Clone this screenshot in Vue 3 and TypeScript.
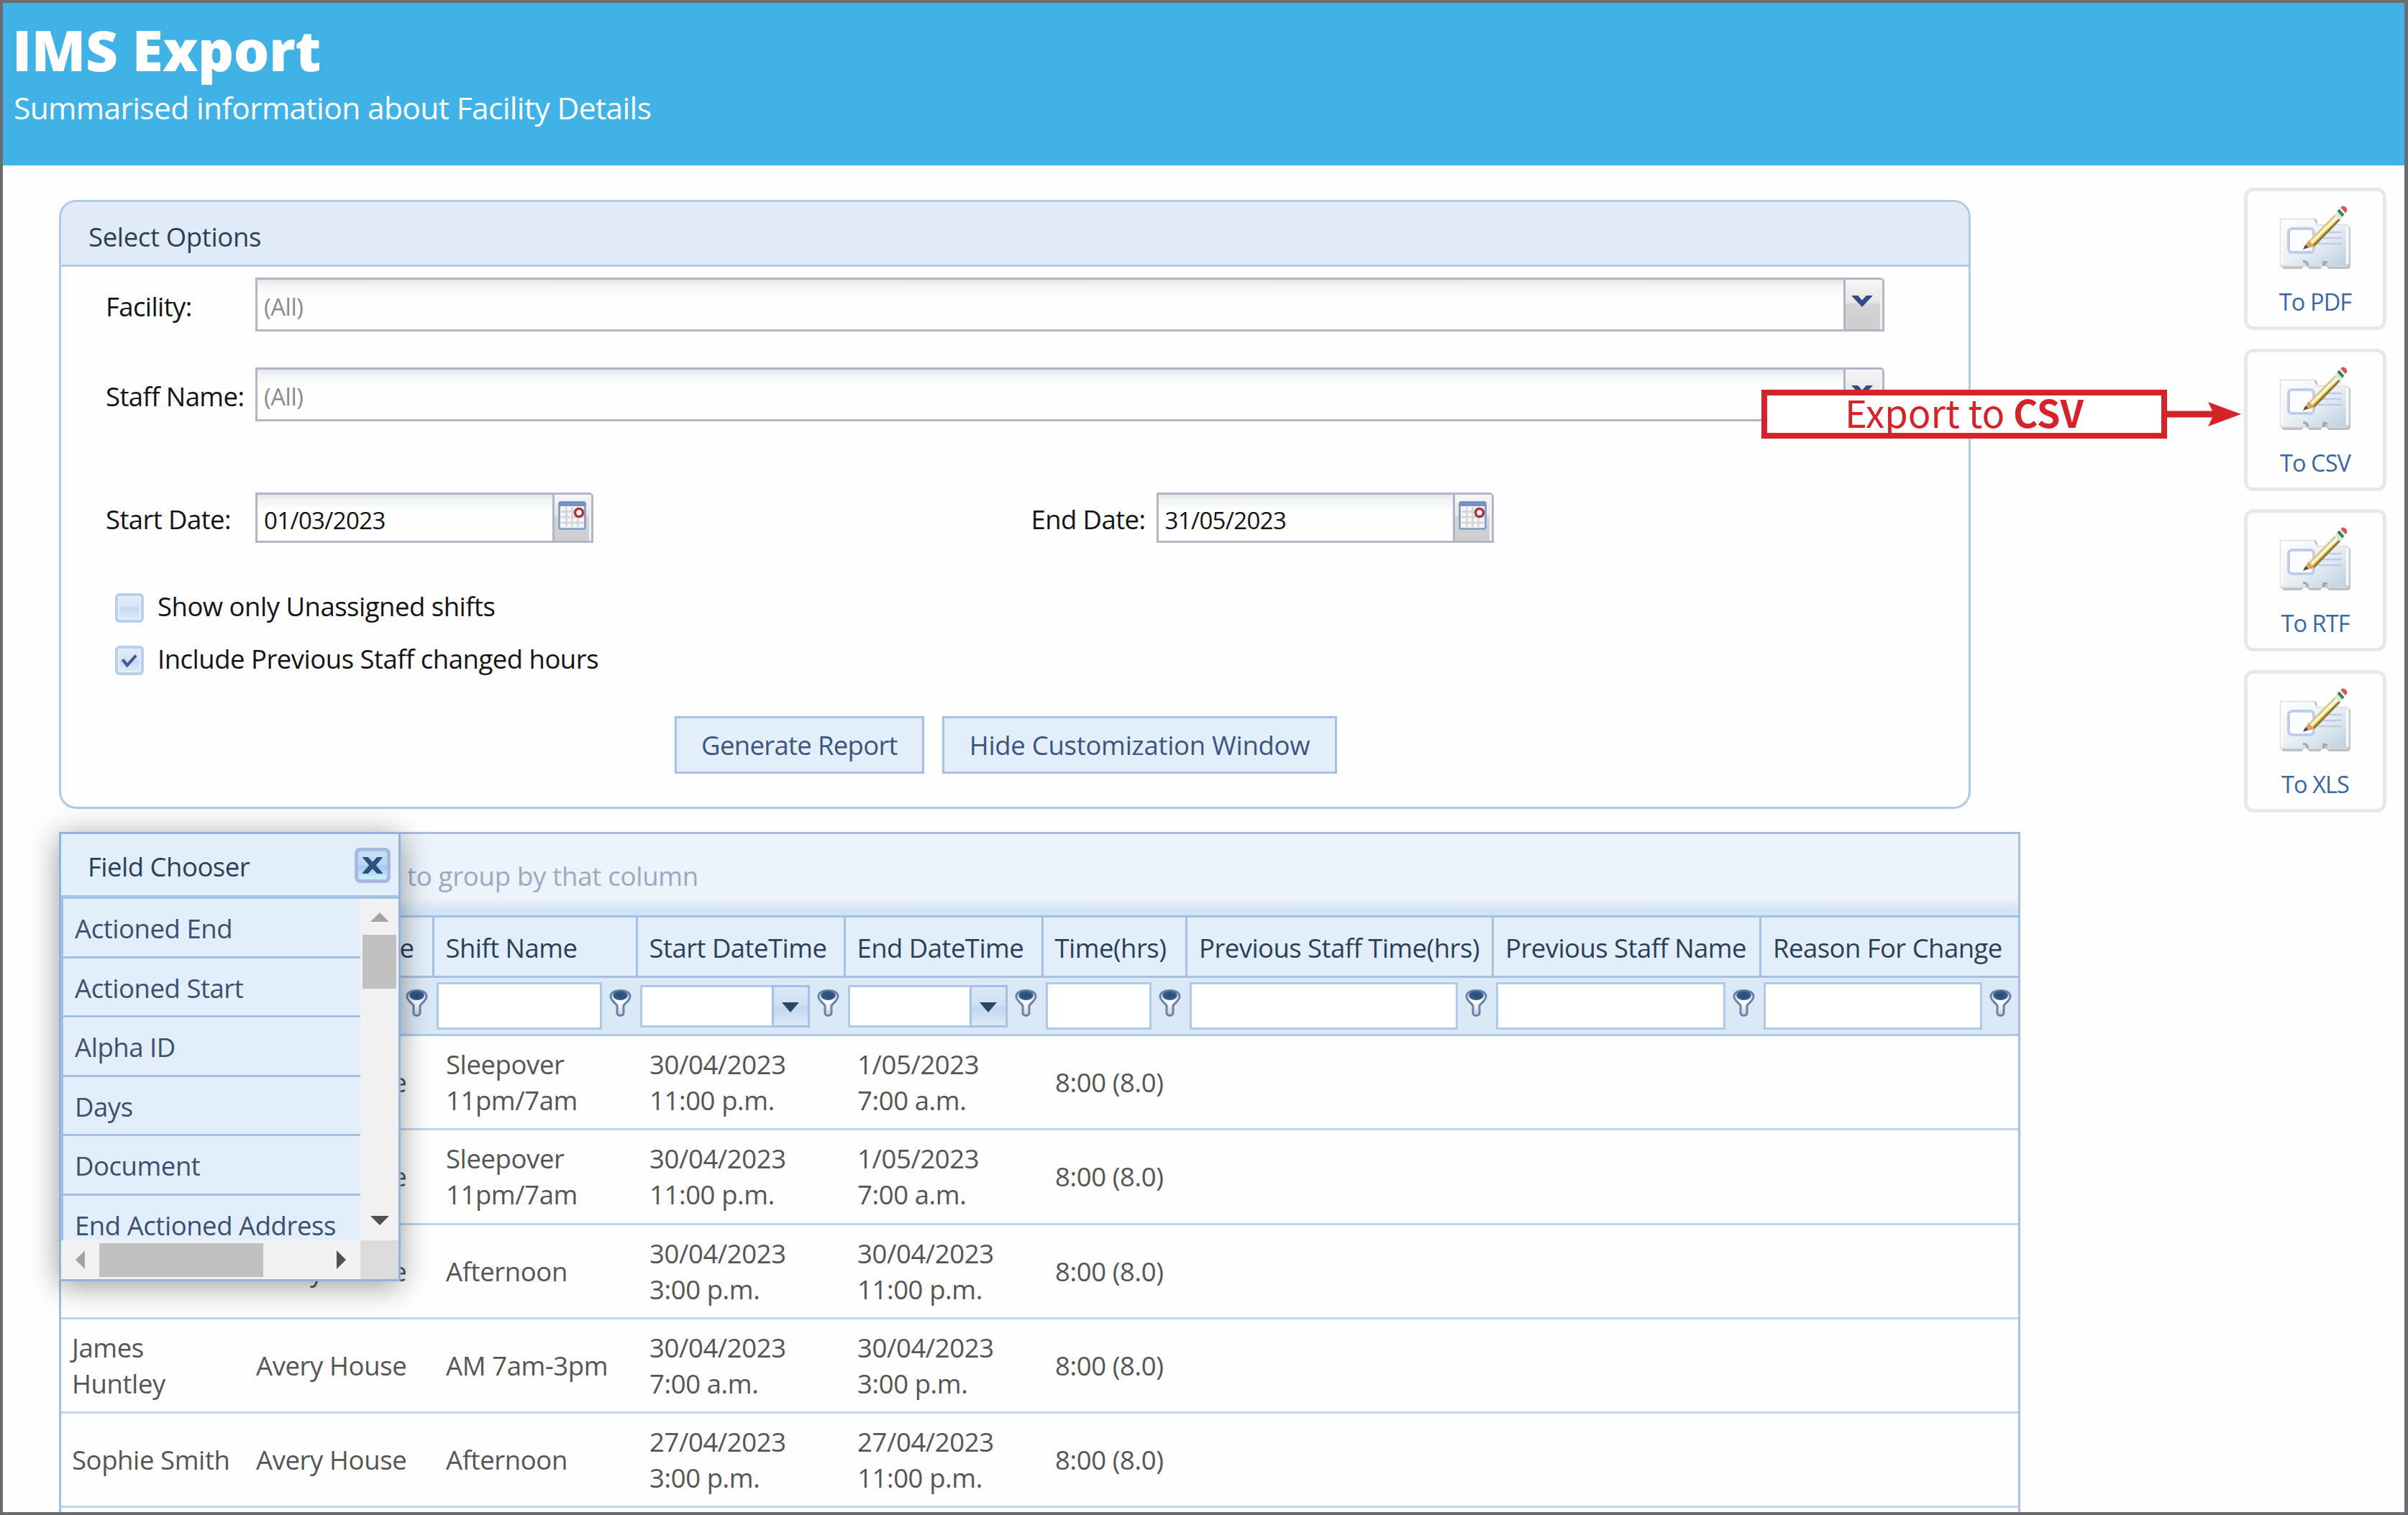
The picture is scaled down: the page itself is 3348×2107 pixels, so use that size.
<script setup lang="ts">
interface Column {
  title: string
  width: number
  filter: 'text' | 'date'
}

interface Shift {
  staff: string
  facility: string
  shift: string
  start: string[]
  end: string[]
  hours: string
}

const columns: Column[] = [
  { title: '', width: 254.5, filter: 'text' },
  { title: 'Facility Name', width: 264, filter: 'text' },
  { title: 'Shift Name', width: 283, filter: 'text' },
  { title: 'Start DateTime', width: 289, filter: 'date' },
  { title: 'End DateTime', width: 275, filter: 'date' },
  { title: 'Time(hrs)', width: 200.5, filter: 'text' },
  { title: 'Previous Staff Time(hrs)', width: 426, filter: 'text' },
  { title: 'Previous Staff Name', width: 372, filter: 'text' },
  { title: 'Reason For Change', width: 357, filter: 'text' },
]

const template = columns.map((c) => c.width + 'px').join(' ')

const rows: Shift[] = [
  { staff: '', facility: 'Avery House', shift: 'Sleepover 11pm/7am', start: ['30/04/2023', '11:00 p.m.'], end: ['1/05/2023', '7:00 a.m.'], hours: '8:00 (8.0)' },
  { staff: '', facility: 'Avery House', shift: 'Sleepover 11pm/7am', start: ['30/04/2023', '11:00 p.m.'], end: ['1/05/2023', '7:00 a.m.'], hours: '8:00 (8.0)' },
  { staff: '', facility: 'Avery House', shift: 'Afternoon', start: ['30/04/2023', '3:00 p.m.'], end: ['30/04/2023', '11:00 p.m.'], hours: '8:00 (8.0)' },
  { staff: 'James Huntley', facility: 'Avery House', shift: 'AM 7am-3pm', start: ['30/04/2023', '7:00 a.m.'], end: ['30/04/2023', '3:00 p.m.'], hours: '8:00 (8.0)' },
  { staff: 'Sophie Smith', facility: 'Avery House', shift: 'Afternoon', start: ['27/04/2023', '3:00 p.m.'], end: ['27/04/2023', '11:00 p.m.'], hours: '8:00 (8.0)' },
]

const exports = ['To PDF', 'To CSV', 'To RTF', 'To XLS']

const fields = ['Actioned End', 'Actioned Start', 'Alpha ID', 'Days', 'Document', 'End Actioned Address']
</script>

<template>
  <div class="page">
    <svg class="defs" width="0" height="0" aria-hidden="true">
      <defs>
        <linearGradient id="cardFill" x1="0" y1="0" x2="1" y2="1">
          <stop offset="0" stop-color="#ffffff" />
          <stop offset="0.5" stop-color="#e9f0f6" />
          <stop offset="1" stop-color="#bccede" />
        </linearGradient>
        <linearGradient id="pencilFill" x1="0" y1="1" x2="1" y2="0">
          <stop offset="0" stop-color="#efcf48" />
          <stop offset="0.5" stop-color="#f4dc6a" />
          <stop offset="1" stop-color="#fdf8dc" />
        </linearGradient>
        <linearGradient id="funnelFill" x1="0" y1="0" x2="0" y2="1">
          <stop offset="0" stop-color="#c9d5e6" />
          <stop offset="0.45" stop-color="#ffffff" />
          <stop offset="1" stop-color="#c3d0e2" />
        </linearGradient>
        <radialGradient id="funnelBall" cx="0.5" cy="0.55" r="0.6">
          <stop offset="0" stop-color="#274977" />
          <stop offset="0.7" stop-color="#3a5c8b" />
          <stop offset="1" stop-color="#7c96ba" />
        </radialGradient>
      </defs>
    </svg>

    <header class="header">
      <h1>IMS Export</h1>
      <p>Summarised information about Facility Details</p>
    </header>

    <main class="main">
      <div class="left">
        <section class="panel">
          <div class="panel-head">Select Options</div>
          <div class="panel-body">
            <div class="row">
              <label class="lbl">Facility:</label>
              <div class="field combo">
                <span class="ph">(All)</span>
                <span class="btn">
                  <svg width="30" height="18" viewBox="0 0 30 18"><path d="M0 1h9l6 6.500 6-6.500h9L15 17z" fill="#2c4d86" /></svg>
                </span>
              </div>
            </div>
            <div class="row staff-row">
              <label class="lbl">Staff Name:</label>
              <div class="field combo">
                <span class="ph">(All)</span>
                <span class="btn">
                  <svg width="30" height="18" viewBox="0 0 30 18"><path d="M0 1h9l6 6.500 6-6.500h9L15 17z" fill="#2c4d86" /></svg>
                </span>
              </div>
            </div>
            <div class="row date-row">
              <template v-for="(d, i) in [['Start Date:', '01/03/2023'], ['End Date:', '31/05/2023']]" :key="d[0]">
                <label class="lbl" :class="{ second: i === 1 }">{{ d[0] }}</label>
                <div class="field date">
                  <span class="val">{{ d[1] }}</span>
                  <span class="btn">
                    <svg width="39" height="40" viewBox="0 0 39 40">
                      <rect x="1.500" y="1.500" width="36" height="37" rx="2.500" fill="#f6f6f8" stroke="#86a3cc" stroke-width="3" />
                      <path d="M1 3a3 3 0 0 1 3-3h31a3 3 0 0 1 3 3v4H1z" fill="#7593c0" />
                      <path d="M4 14.500h31M4 22h31M4 30h31M11.500 8v28M19.500 8v28M27.500 8v28" stroke="#d3d3d7" stroke-width="2.500" fill="none" />
                      <circle cx="29" cy="16" r="5.500" fill="#fff" stroke="#ad3338" stroke-width="3.600" />
                    </svg>
                  </span>
                </div>
              </template>
            </div>
            <div class="check first">
              <span class="box"></span>
              <span class="check-text">Show only Unassigned shifts</span>
            </div>
            <div class="check">
              <span class="box on">
                <svg width="24" height="20" viewBox="0 0 26 22"><path d="M2.500 9l7 9L23 3" fill="none" stroke="#3d5d8e" stroke-width="4.500" /></svg>
              </span>
              <span class="check-text">Include Previous Staff changed hours</span>
            </div>
            <div class="actions">
              <button class="gen">Generate Report</button>
              <button class="hide">Hide Customization Window</button>
            </div>
          </div>
        </section>

        <section class="grid">
          <div class="group"><span>to group by that column</span></div>
          <div class="grid-row head" :style="{ gridTemplateColumns: template }">
            <div v-for="(c, i) in columns" :key="i" class="hcell">{{ c.title }}</div>
          </div>
          <div class="grid-row filters" :style="{ gridTemplateColumns: template }">
            <div v-for="(c, i) in columns" :key="i" class="fcell">
              <span v-if="c.filter === 'text'" class="finput"></span>
              <span v-else class="finput fdate">
                <span class="fbtn"><svg width="24" height="14" viewBox="0 0 24 14"><path d="M0 0h24L12 14z" fill="#2c4363" /></svg></span>
              </span>
              <svg class="funnel" width="31" height="38" viewBox="0 0 31 38">
                <path d="M2 10C2 4 8 1.500 15.500 1.500S29 4 29 10c0 5-6 8-9 12.500V33c0 4.500-9 4.500-9 0V22.500C8 18 2 15 2 10z" fill="url(#funnelFill)" stroke="#6683ac" stroke-width="3" />
                <ellipse cx="15.500" cy="8" rx="10.500" ry="7" fill="url(#funnelBall)" />
              </svg>
            </div>
          </div>
          <div v-for="(r, i) in rows" :key="i" class="grid-row data" :style="{ gridTemplateColumns: template }">
            <div class="cell">{{ r.staff }}</div>
            <div class="cell">{{ r.facility }}</div>
            <div class="cell">{{ r.shift }}</div>
            <div class="cell">{{ r.start[0] }}<br />{{ r.start[1] }}</div>
            <div class="cell">{{ r.end[0] }}<br />{{ r.end[1] }}</div>
            <div class="cell">{{ r.hours }}</div>
          </div>
          <div class="grid-row data"></div>
        </section>
      </div>

      <aside class="exports">
        <button v-for="e in exports" :key="e" class="export">
          <svg width="100" height="94" viewBox="0 0 100 94">
            <path d="M3 23h47l4 7h41c2 0 4 2 4 4v51c0 3-2 5-4 5H69l-4-4H60l-3 4H42l-4-4h-4l-3 4H6l-4-4z" fill="#bdc1c1" />
            <path d="M1.500 20.500H50l2 5v3h41.500l3.500 3.500v50l-3.500 4H68c-1-8-8-8-8 0H41c0-4-2-8-7-8l3 8H1.500z" fill="url(#cardFill)" stroke="#d8dee1" stroke-width="1.500" />
            <path d="M33 80c4-1 6 1 7 5M61 86l1-6 5 1" fill="none" stroke="#9da1a3" stroke-width="2.500" />
            <path d="M50 21l2 5" stroke="#a9adaf" stroke-width="2" />
            <path d="M94.500 31v52M3.500 23v60" stroke="#f8fafb" stroke-width="3" />
            <rect x="13" y="34" width="35" height="33" rx="5" fill="#fcfdfe" stroke="#c1ccea" stroke-width="4" />
            <path d="M66 39h21M58 47h29M54 55h33" stroke="#c3cae8" stroke-width="2.500" />
            <path d="M41 51L77 14.500l8 7.500-36 37z" fill="url(#pencilFill)" />
            <path d="M41 51L77 14.500l2 2-36 36.500z" fill="#d9c68a" />
            <path d="M43 53l36-36.500 2 2L45 55z" fill="#fffbe0" />
            <path d="M46.500 56.500L82.500 20l2.500 2-36 37z" fill="#8f7a42" />
            <path d="M34 62l6.500-12 9 9z" fill="#dfa265" />
            <path d="M33 63l3.500-7 4 4z" fill="#4a4a4a" />
            <path d="M77 14.500l4-5.500 8.500 8.500-4.500 4.500z" fill="#dfe5e4" />
            <path d="M80.500 9.500l3-3 7 8-3 3z" fill="#2f8450" />
            <path d="M83.500 6.500l2-2 7 7.500-2 2.500z" fill="#eef1f1" />
            <path d="M86 4c3-4 10 1.500 8 6l-2 2-6.500-7z" fill="#dc555a" />
          </svg>
          <span>{{ e }}</span>
        </button>
      </aside>
    </main>

    <div class="chooser">
      <div class="chooser-head">
        <span>Field Chooser</span>
        <span class="close">
          <svg width="30" height="25" viewBox="0 0 30 26"><path d="M0 1h8.500l6.500 7 6.500-7H30l-2 2.500-8 9.500 8 9 2 3h-8.500L15 18l-6.500 7H0l2-3 8-9-8-9.500z" fill="#2d4f80" /></svg>
        </span>
      </div>
      <div class="chooser-body">
        <div class="items">
          <div v-for="f in fields" :key="f" class="item">{{ f }}</div>
        </div>
        <div class="vbar">
          <svg width="26" height="13" viewBox="0 0 26 13"><path d="M0 13L13 0l13 13z" fill="#a3a3a3" /></svg>
          <div class="vthumb"></div>
          <svg class="down" width="26" height="13" viewBox="0 0 26 13"><path d="M0 0h26L13 13z" fill="#505050" /></svg>
        </div>
      </div>
      <div class="hbar">
        <svg width="13" height="26" viewBox="0 0 13 26"><path d="M13 0v26L0 13z" fill="#a3a3a3" /></svg>
        <div class="hthumb"></div>
        <svg class="right" width="13" height="26" viewBox="0 0 13 26"><path d="M0 0v26l13-13z" fill="#505050" /></svg>
        <div class="corner"></div>
      </div>
    </div>

    <div class="callout">
      <div class="callout-box">Export to&nbsp;<b>CSV</b></div>
      <svg width="103" height="34" viewBox="0 0 103 34"><path d="M0 12.500h63L57 0l46 17-46 17 6-12.500H0z" fill="#d5232a" /></svg>
    </div>
  </div>
</template>

<style>
html,
body {
  margin: 0;
  overflow: hidden;
}
</style>

<style scoped>
* {
  box-sizing: border-box;
}
.page {
  position: relative;
  width: 3348px;
  height: 2107px;
  overflow: hidden;
  background: #fefefe;
  border: 4px solid #6b6b70;
  border-right-width: 5px;
  font-family: 'Open Sans', 'Noto Sans', sans-serif;
  font-size: 36.5px;
  letter-spacing: -0.5px;
  line-height: 50px;
  color: #141414;
}
.defs {
  position: absolute;
}
button {
  font: inherit;
  letter-spacing: inherit;
  padding: 0;
}
.header {
  height: 226px;
  padding: 21px 0 0 13px;
  background: #40b2e5;
  color: #fff;
}
h1 {
  margin: 0;
  font-size: 78px;
  line-height: 88px;
  font-weight: 800;
  letter-spacing: -0.3px;
}
.header p {
  margin: 7px 0 0 2px;
  font-size: 42.5px;
  line-height: 60px;
  letter-spacing: -0.63px;
}
.main {
  display: flex;
  justify-content: space-between;
}
.left {
  width: 2805px;
  padding: 48px 0 0 78px;
}
.panel {
  width: 2658px;
  height: 847px;
  border: 3px solid #afcae9;
  border-radius: 24px;
  overflow: hidden;
}
.panel-head {
  height: 90px;
  padding: 23px 0 0 38px;
  background: #e0ebf7;
  border-bottom: 3px solid #afcae9;
  color: #2c3f59;
  letter-spacing: -0.35px;
}
.panel-body {
  padding: 15px 0 0 61px;
}
.row {
  display: flex;
  align-items: center;
  height: 75px;
}
.staff-row {
  margin-top: 50px;
}
.date-row {
  height: 70px;
  margin-top: 99px;
}
.lbl {
  width: 209px;
  padding: 4px 0 0 1px;
  white-space: nowrap;
  letter-spacing: -0.6px;
}
.lbl.second {
  width: 174px;
  margin-left: 609px;
  padding-left: 0;
}
.field {
  display: flex;
  height: 100%;
  border: 3px solid #b3b4c7;
  border-top-right-radius: 6px;
  background: linear-gradient(#e3e6e7, #f3f5f5 8px, #fefefe 24px);
  font-size: 33px;
}
.combo {
  width: 2265px;
}
.date {
  width: 469.5px;
}
.ph,
.val {
  flex: 1;
  padding: 13px 0 0 9px;
}
.val {
  padding-top: 11px;
  letter-spacing: -0.65px;
}
.ph {
  color: #8c8c8c;
}
.btn {
  width: 54px;
  border-left: 3px solid #b3b4c7;
  box-shadow: inset -3px 0 0 #f3f3f5;
  background: linear-gradient(#f6f6f6, #e6e6e6 45%, #d4d4d4 50%, #cecece);
  display: flex;
  justify-content: center;
  padding: 21px 5px 0 0;
}
.date .btn {
  padding-top: 9px;
  padding-right: 2px;
}
.check {
  display: flex;
  height: 41px;
  margin: 32px 0 0 14px;
}
.check.first {
  margin-top: 70px;
}
.box {
  width: 40px;
  height: 41px;
  margin-right: 19px;
  border: 4px solid #b8d0ee;
  border-radius: 6px;
  background: linear-gradient(#dfebf7, #d5e5f5 45%, #c3daf2 50%, #deeaf8);
  box-shadow: inset 0 0 0 2px #e4effa;
  display: flex;
  align-items: center;
  justify-content: center;
}
.check-text {
  margin-top: -7px;
}
.actions {
  display: flex;
  gap: 25px;
  margin: 57px 0 0 792px;
}
.actions button {
  height: 80px;
  border: 3px solid #a5c1e7;
  background: #e2effb;
  color: #3b5580;
}
.actions .gen {
  width: 347px;
  letter-spacing: -0.7px;
}
.actions .hide {
  width: 549px;
  letter-spacing: -0.28px;
}
.grid {
  width: 2727px;
  margin-top: 32px;
  border: 3px solid #a5c0e7;
  border-bottom: 0;
}
.group {
  width: 100%;
  height: 115.5px;
  padding: 33px 0 0;
  border-bottom: 3px solid #a5c0e7;
  background: linear-gradient(#ebf3fb 78%, #e5ebf7 86%, #d2e6f5 93%, #cfe5f4);
  color: #9aa9c4;
}
.group span {
  display: block;
  width: 886px;
  text-align: right;
  white-space: nowrap;
  letter-spacing: -0.25px;
}
.grid-row {
  display: grid;
}
.head {
  height: 84.5px;
  background: #e2effb;
  border-bottom: 3px solid #a5c0e7;
  color: #2c3f59;
}
.hcell {
  padding: 17px 0 0 16px;
  border-right: 3px solid #a5c0e7;
  white-space: nowrap;
  letter-spacing: -0.55px;
}
.hcell:last-child {
  border-right: 0;
}
.filters {
  height: 81px;
  background: #dbe8f5;
  border-bottom: 3px solid #afcae9;
}
.fcell {
  display: flex;
  align-items: center;
  padding: 0 9px 0 3px;
}
.finput {
  flex: 1;
  height: 66px;
  border: 3px solid #aecaea;
  background: #fff;
  margin-right: 10px;
}
.fdate {
  height: 59px;
  display: flex;
  justify-content: flex-end;
}
.fbtn {
  width: 53px;
  margin: -3px;
  border: 3px solid #a5c0e7;
  background: linear-gradient(#dce9f6, #cfe0f3 48%, #c0d7f0 52%, #dceaf7);
  display: flex;
  align-items: center;
  justify-content: center;
  padding-top: 4px;
}
.funnel {
  margin-top: -8px;
}
.data {
  height: 131.25px;
  border-bottom: 3px solid #c0d5ee;
  align-items: center;
  color: #555;
}
.cell {
  padding: 0 0 0 16.5px;
  letter-spacing: -0.4px;
}
.cell:nth-child(1) {
  padding: 0 4px 0 15px;
}
.cell:nth-child(3) {
  padding-right: 20px;
}
.exports {
  display: flex;
  flex-direction: column;
  gap: 25.600px;
  padding: 31px 25px 0 0;
}
.export {
  width: 198px;
  height: 198px;
  display: flex;
  flex-direction: column;
  align-items: center;
  padding-top: 18px;
  border: 5px solid #e9e8e9;
  border-radius: 13px;
  background: #fefefe;
  color: #3a689f;
  font-size: 32.500px;
  letter-spacing: -0.9px;
}
.export span {
  margin-top: 17px;
}
.chooser {
  position: absolute;
  left: 78px;
  top: 1153px;
  width: 475px;
  height: 625px;
  border: 3px solid #8fb4e2;
  background: #e2effb;
  box-shadow: 0 6px 40px rgba(0, 0, 0, 0.4);
  color: #3b4f70;
}
.chooser-head {
  height: 90px;
  border-bottom: 5px solid #a3c0e8;
  padding: 17px 11px 0 37px;
  display: flex;
  justify-content: space-between;
  color: #2c3f59;
}
.chooser-head > span:first-child {
  margin-top: 3px;
}
.close {
  width: 50px;
  height: 49px;
  margin-top: 2px;
  border: 5px solid #a5b9e2;
  border-radius: 8px;
  background: linear-gradient(#c8ddf5, #b9d7f2 48%, #9fcaec 52%, #cdeeff);
  display: flex;
  align-items: center;
  justify-content: center;
}
.chooser-body {
  display: flex;
  height: 475px;
}
.items {
  width: 416px;
  overflow: hidden;
  border-left: 3px solid #a3c0e8;
}
.item {
  height: 82.5px;
  padding: 16px 0 0 16px;
  border-bottom: 3px solid #a5c0e7;
  white-space: nowrap;
  letter-spacing: -0.45px;
}
.vbar {
  width: 53px;
  background: #f1f1f1;
  display: flex;
  flex-direction: column;
  align-items: center;
  padding: 19px 0 21px;
}
.vthumb {
  width: 47px;
  height: 75px;
  margin-top: 18px;
  background: #c1c1c1;
}
.down {
  margin-top: auto;
}
.hbar {
  display: flex;
  align-items: center;
  height: 54px;
  padding-left: 20px;
  background: #f1f1f1;
}
.hthumb {
  width: 228px;
  height: 47px;
  margin-left: 20px;
  background: #c1c1c1;
}
.right {
  margin-left: auto;
  margin-right: 20px;
}
.corner {
  width: 53px;
  height: 100%;
  background: #dcdcdc;
}
.callout {
  position: absolute;
  left: 2445px;
  top: 538px;
  display: flex;
  align-items: center;
  color: #d5232a;
}
.callout-box {
  width: 564px;
  height: 68px;
  border: 8px solid #d5232a;
  background: #fff;
  text-align: center;
  font-family: 'Noto Sans CJK SC', sans-serif;
  font-size: 52.5px;
  line-height: 44px;
  letter-spacing: 0;
  white-space: nowrap;
}
</style>
